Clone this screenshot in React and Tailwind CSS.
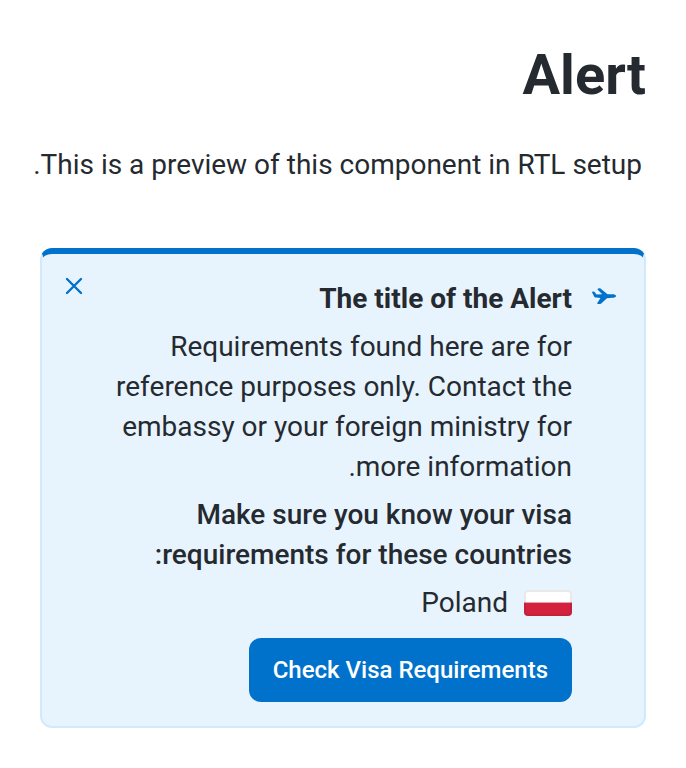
import React from "react";

function AirplaneIcon() {
  return (
    <svg className="mt-1 h-8 w-8 shrink-0 text-[#0172cb]" viewBox="0 0 32 32" fill="currentColor" aria-hidden="true">
      <path d="M4.300 9.700 5.700 9.500c.4 0 .7.200.9.500L8.600 12.500l5.600-.2-4.400-4.500c-.5-.6-.3-1.300.4-1.400l1.300-.2c.4 0 .7.100 1 .3L19.500 12.300h4.700c2 0 3.900.5 3.900 1.600s-1.800 1.800-3.900 1.900l-5.300.5-5.400 5c-.5.400-.9.600-1.400.6H9.900c-.7 0-.9-.4-.6-.9l3.200-5-4.200-.4c-1.200-.1-2-.7-2.400-1.700L4 10.300c-.1-.3 0-.5.3-.6z" />
    </svg>
  );
}

function CloseIcon() {
  return (
    <svg className="h-6 w-6" viewBox="0 0 24 24" fill="none" stroke="currentColor" strokeWidth="2.4" strokeLinecap="round" aria-hidden="true">
      <path d="M5 5l14 14M19 5L5 19" />
    </svg>
  );
}

function PolandFlag() {
  return (
    <svg className="h-[26px] w-12 shrink-0" viewBox="0 0 48 26" role="img" aria-label="Flag of Poland">
      <clipPath id="flag">
        <rect width="48" height="26" rx="4" />
      </clipPath>
      <g clipPath="url(#flag)">
        <rect width="48" height="13" fill="#fff" />
        <rect y="12" width="48" height="1" fill="#e5a0ac" />
        <rect y="13" width="48" height="13" fill="#d4213d" />
      </g>
      <rect x="1" y="1" width="46" height="24" rx="3" fill="none" stroke="#252a31" strokeOpacity="0.1" strokeWidth="2" />
    </svg>
  );
}

export default function App() {
  return (
    <main dir="rtl" className="bg-white p-10 font-[Roboto,sans-serif] text-[28px] leading-10 text-[#252a31]">
      <h1 className="text-[56px] leading-[70px] font-bold">Alert</h1>
      <p className="mt-[35px] pr-1 sm:whitespace-nowrap">This is a preview of this component in RTL setup.</p>
      <section role="alert" className="relative mt-[63px] flex rounded-xl border-2 border-t-[6px] border-[#d0e9fb] border-t-[#0172cb] bg-[#e8f4fd] p-6">
        <AirplaneIcon />
        <div className="mr-4 flex-1 pt-px pl-8">
          <h2 className="font-bold">The title of the Alert</h2>
          <p className="mt-2">Requirements found here are for reference purposes only. Contact the embassy or your foreign ministry for more information.</p>
          <p className="mt-2 font-medium">Make sure you know your visa requirements for these countries:</p>
          <div className="mt-2 flex items-center gap-4">
            <PolandFlag />
            <span>Poland</span>
          </div>
          <button type="button" className="mt-[15px] block h-16 rounded-xl bg-[#0172cb] px-6 text-2xl font-medium text-white">Check Visa Requirements</button>
        </div>
        <button type="button" aria-label="Close" className="absolute top-5 left-5 text-[#0172cb]">
          <CloseIcon />
        </button>
      </section>
    </main>
  );
}
